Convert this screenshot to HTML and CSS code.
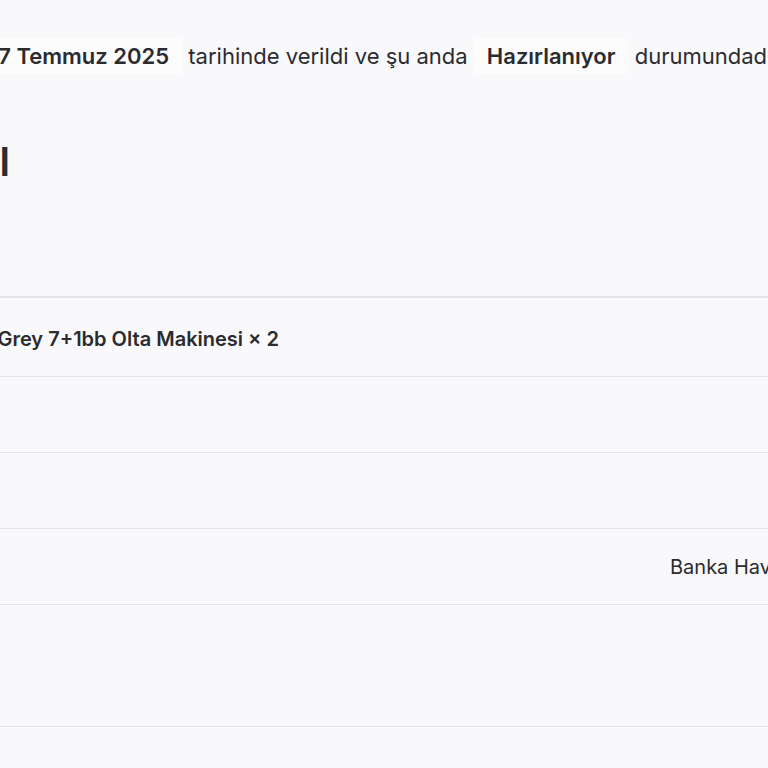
FILE: index.html
```html
<!DOCTYPE html>
<html lang="tr">
<head>
  <meta charset="UTF-8" />
  <meta name="viewport" content="width=device-width, initial-scale=1" />
  <title>Sipariş #4821</title>
  <link rel="stylesheet" href="styles.css">
</head>
<body>
  <main class="order">
    <p class="order-intro">
      Sipariş #4821, <mark>17 Temmuz 2025</mark> tarihinde verildi ve şu anda <mark>Hazırlanıyor</mark> durumundadır.
    </p>

    <h2 class="order-title"><span>Sipariş detayl</span></h2>

    <table class="order-table">
      <tbody>
        <tr class="item-row">
          <td class="col-thumb">&nbsp;</td>
          <td class="col-name">Daiwa Grey 7+1bb Olta Makinesi <span class="qty">× 2</span></td>
          <td class="col-value">&nbsp;</td>
        </tr>
      </tbody>
      <tfoot>
        <tr>
          <th scope="row">&nbsp;</th>
          <td></td>
          <td class="col-value"></td>
        </tr>
        <tr>
          <th scope="row">&nbsp;</th>
          <td></td>
          <td class="col-value"></td>
        </tr>
        <tr>
          <th scope="row">&nbsp;</th>
          <td></td>
          <td class="col-value">Banka Havalesi / EFT</td>
        </tr>
        <tr class="total-row">
          <th scope="row">&nbsp;</th>
          <td></td>
          <td class="col-value"></td>
        </tr>
      </tfoot>
    </table>
  </main>
</body>
</html>
```

FILE: styles.css
```css
html,
body {
  margin: 0;
  padding: 0;
  background: #f9f9fb;
  overflow: hidden;
}

body {
  font-family: 'Inter', 'Noto Sans', sans-serif;
  color: #2b2b30;
}

.order {
  width: 1240px;
  margin-left: -150px;
  padding-top: 38px;
}

.order-intro {
  margin: 0 0 0 -28px;
  font-size: 22px;
  line-height: 36px;
  white-space: nowrap;
}

.order-intro mark {
  background: #fcfcfd;
  color: #2b2b30;
  font-weight: 600;
  padding: 5px 13px;
}

.order-title {
  display: flex;
  justify-content: flex-end;
  width: 160px;
  margin: 64px 0 0;
  font-size: 40px;
  font-weight: 600;
  line-height: 48px;
  white-space: nowrap;
}

.order-table {
  margin-top: 110px;
  width: 100%;
  table-layout: fixed;
  border-collapse: collapse;
  border-top: 2px solid #e4e4e8;
  font-size: 20px;
}

.order-table th,
.order-table td {
  padding: 25px 0 24px;
  line-height: 26px;
  border-bottom: 1px solid #e4e4e8;
  text-align: left;
  white-space: nowrap;
}

.order-table .item-row td {
  padding: 28px 0 24px;
}

.col-thumb {
  width: 83px;
}

.col-name {
  font-weight: 600;
}

.col-value {
  width: 420px;
}

.order-table .total-row th,
.order-table .total-row td {
  padding: 25px 0 70px;
}
```
